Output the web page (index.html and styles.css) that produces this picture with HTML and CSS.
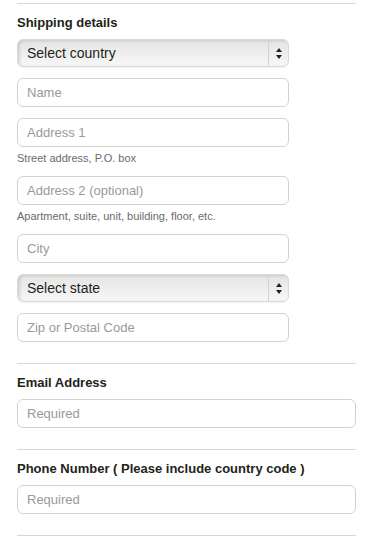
FILE: index.html
```html
<!DOCTYPE html>
<html lang="en">
<head>
  <meta charset="UTF-8">
  <meta name="viewport" content="width=device-width, initial-scale=1.0">
  <title>Checkout - Shipping</title>
  <link rel="stylesheet" href="styles.css">
</head>
<body>

  <div class="checkout">
    <!-- Shipping -->
    <div class="section">
      <div class="section-title">Shipping details</div>

      <div class="field narrow">
        <div class="select-box">
          <span class="select-text">Select country</span>
          <span class="select-arrows">
            <svg width="6" height="11" viewBox="0 0 6 11"><path d="M3 0 L6 4 L0 4 Z M0 7 L6 7 L3 11 Z" fill="#1e2418"/></svg>
          </span>
        </div>
      </div>

      <div class="field narrow">
        <input class="text-input" type="text" placeholder="Name">
      </div>

      <div class="field narrow">
        <input class="text-input" type="text" placeholder="Address 1">
        <div class="hint">Street address, P.O. box</div>
      </div>

      <div class="field narrow">
        <input class="text-input" type="text" placeholder="Address 2 (optional)">
        <div class="hint">Apartment, suite, unit, building, floor, etc.</div>
      </div>

      <div class="field narrow">
        <input class="text-input" type="text" placeholder="City">
      </div>

      <div class="field narrow">
        <div class="select-box">
          <span class="select-text">Select state</span>
          <span class="select-arrows">
            <svg width="6" height="11" viewBox="0 0 6 11"><path d="M3 0 L6 4 L0 4 Z M0 7 L6 7 L3 11 Z" fill="#1e2418"/></svg>
          </span>
        </div>
      </div>

      <div class="field narrow">
        <input class="text-input" type="text" placeholder="Zip or Postal Code">
      </div>
    </div>

    <!-- Email -->
    <div class="section">
      <div class="section-title">Email Address</div>
      <div class="field">
        <input class="text-input" type="email" placeholder="Required">
      </div>
    </div>

    <!-- Phone -->
    <div class="section">
      <div class="section-title">Phone Number ( Please include country code )</div>
      <div class="field">
        <input class="text-input" type="tel" placeholder="Required">
      </div>
    </div>

    <div class="section"></div>
  </div>

</body>
</html>
```

FILE: styles.css
```css
/* Page */
body {
  margin: 0;
  padding: 3px 10px 0 17px;
  background: #fff;
  font-family: 'Liberation Sans', Arial, sans-serif;
  color: #1e2418;
}

/* Each block of the form sits under a thin rule */
.section {
  border-top: 1px solid #d6d6d2;
  padding: 11px 0 10px;
}

.section-title {
  font-size: 13px;
  font-weight: bold;
  line-height: 16px;
  margin-bottom: 8px;
}

.field {
  margin-bottom: 11px;
}

.field.narrow {
  width: 272px;
}

/* Text inputs */
.text-input {
  display: block;
  box-sizing: border-box;
  width: 100%;
  height: 29px;
  margin: 0;
  padding: 0 9px;
  border: 1px solid #d3d3ce;
  border-radius: 6px;
  background: #fff;
  font-family: inherit;
  font-size: 13px;
  color: #333;
  outline: none;
}

.text-input::placeholder {
  color: #999;
}

/* Helper text under an input */
.hint {
  margin-top: 5px;
  font-size: 11px;
  line-height: 13px;
  color: #6b6b6b;
}

/* Select drop-downs */
.select-box {
  box-sizing: border-box;
  display: flex;
  align-items: stretch;
  height: 28px;
  border: 1px solid #d9d9d6;
  border-radius: 6px;
  background: linear-gradient(#e4e4e4, #f7f7f7);
  box-shadow: inset 2px 1px 3px rgba(0, 0, 0, 0.12), 0 1px 1px rgba(0, 0, 0, 0.05);
}

.select-text {
  flex: 1;
  display: flex;
  align-items: center;
  padding-left: 9px;
  font-size: 14px;
  color: #1e2418;
}

.select-arrows {
  width: 19px;
  display: flex;
  align-items: center;
  justify-content: center;
  border-left: 1px solid #d2d2cf;
}

/* Last rule has nothing under it */
.section:last-child {
  padding: 0;
}
```
